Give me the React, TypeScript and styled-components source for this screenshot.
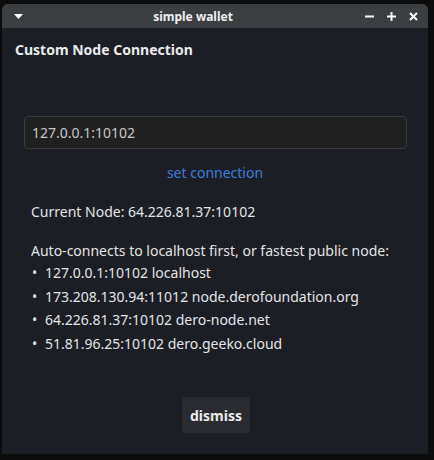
import React from "react";
import styled, { createGlobalStyle } from "styled-components";

const Global = createGlobalStyle`
  html, body { margin: 0; padding: 0; background: #0c0c0c; }
  body { font-family: "Noto Sans", "Open Sans", sans-serif; }
`;

const Screen = styled.div`
  width: 434px;
  height: 460px;
  padding: 4px 6px 6px 2px;
  box-sizing: border-box;
`;

const Window = styled.div`
  width: 426px;
  height: 450px;
  display: flex;
  flex-direction: column;
  background: #1b1e25;
  border-radius: 6px 6px 0 0;
  overflow: hidden;
`;

const TitleBar = styled.div`
  height: 24px;
  flex: none;
  background: #3c3f41;
  display: grid;
  grid-template-columns: 28px 1fr 72px;
  align-items: center;
  color: #eef0f2;
`;

const TitleText = styled.div`
  text-align: center;
  font-weight: 700;
  font-size: 12px;
`;

const Controls = styled.div`
  display: flex;
  justify-content: flex-end;
  gap: 13px;
  padding-right: 10px;
  align-items: center;
`;

const MenuArrow = styled.div`
  padding-left: 12px;
  display: flex;
  align-items: center;
`;

const Body = styled.div`
  flex: 1;
  display: flex;
  flex-direction: column;
  padding: 12px 0 0 0;
`;

const Heading = styled.div`
  font-size: 14px;
  font-weight: 700;
  color: #eaeaea;
  padding-left: 13px;
  line-height: 20px;
`;

const Input = styled.input`
  margin: 56px 0 0 22px;
  width: 383px;
  height: 33px;
  box-sizing: border-box;
  background: #202020;
  border: 1px solid #3a3a3b;
  border-radius: 4px;
  color: #c8c8c8;
  font-family: "Noto Sans", sans-serif;
  font-size: 14px;
  padding: 0 7px;
  outline: none;
`;

const LinkButton = styled.button`
  align-self: center;
  margin-top: 14px;
  background: none;
  border: none;
  padding: 0;
  color: #3b7ddd;
  font-family: "Noto Sans", sans-serif;
  font-size: 14px;
  line-height: 20px;
  cursor: pointer;
`;

const Info = styled.div`
  padding-left: 29px;
  margin-top: 19px;
  color: #e4e4e4;
  font-size: 14px;
`;

const Line = styled.div<{ $gap?: number }>`
  line-height: 20px;
  margin-top: ${(p) => p.$gap ?? 0}px;
`;

const List = styled.ul`
  list-style: none;
  margin: 2px 0 0 0;
  padding: 0;
`;

const Item = styled.li`
  line-height: 20px;
  height: 23.5px;
  display: flex;
  &::before {
    content: "•";
    width: 13px;
    flex: none;
    padding-left: 1px;
  }
`;

const Footer = styled.div`
  margin-top: auto;
  display: flex;
  justify-content: center;
  padding: 0 0 21px 0;
`;

const Dismiss = styled.button`
  width: 68px;
  height: 36px;
  background: #2a2b30;
  border: none;
  border-radius: 4px;
  color: #ececec;
  font-family: "Noto Sans", sans-serif;
  font-weight: 700;
  font-size: 14px;
  margin-left: 2px;
`;

const nodes = [
  "127.0.0.1:10102 localhost",
  "173.208.130.94:11012 node.derofoundation.org",
  "64.226.81.37:10102 dero-node.net",
  "51.81.96.25:10102 dero.geeko.cloud",
];

export default function App() {
  return (
    <>
      <Global />
      <Screen>
        <Window>
          <TitleBar>
            <MenuArrow>
              <svg width="9" height="5" viewBox="0 0 9 5">
                <polygon points="0,0 9,0 4.5,5" fill="#ffffff" />
              </svg>
            </MenuArrow>
            <TitleText>simple wallet</TitleText>
            <Controls>
              <svg width="9" height="9" viewBox="0 0 9 9">
                <rect x="0" y="3.5" width="9" height="2" fill="#fff" />
              </svg>
              <svg width="9" height="9" viewBox="0 0 9 9">
                <rect x="0" y="3.5" width="9" height="2" fill="#fff" />
                <rect x="3.5" y="0" width="2" height="9" fill="#fff" />
              </svg>
              <svg width="9" height="9" viewBox="0 0 9 9">
                <path d="M1 1 L8 8 M8 1 L1 8" stroke="#fff" strokeWidth="2" />
              </svg>
            </Controls>
          </TitleBar>
          <Body>
            <Heading>Custom Node Connection</Heading>
            <Input defaultValue="127.0.0.1:10102" />
            <LinkButton>set connection</LinkButton>
            <Info>
              <Line>Current Node: 64.226.81.37:10102</Line>
              <Line $gap={19}>Auto-connects to localhost first, or fastest public node:</Line>
              <List>
                {nodes.map((n) => (
                  <Item key={n}>{n}</Item>
                ))}
              </List>
            </Info>
            <Footer>
              <Dismiss>dismiss</Dismiss>
            </Footer>
          </Body>
        </Window>
      </Screen>
    </>
  );
}
